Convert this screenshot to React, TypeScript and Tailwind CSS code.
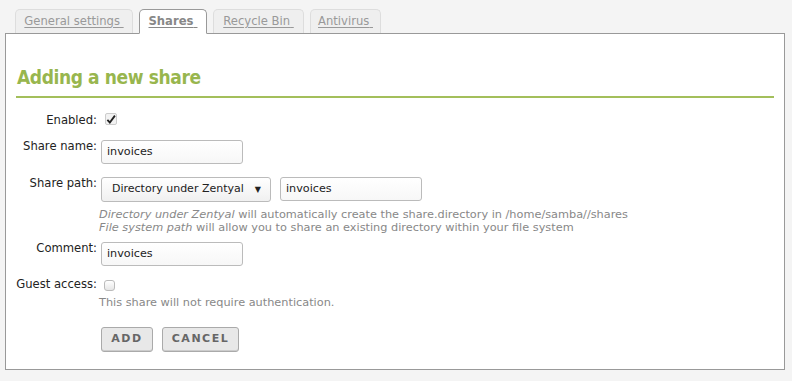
import React from 'react';

const tabs = [
  { label: 'General settings', active: false, w: 'w-[118px]' },
  { label: 'Shares', active: true, w: 'w-[68px]' },
  { label: 'Recycle Bin', active: false, w: 'w-[91px]' },
  { label: 'Antivirus', active: false, w: 'w-[71px]' },
];

const Field: React.FC<{ label: string; children: React.ReactNode }> = ({ label, children }) => (
  <div className="flex items-start">
    <div className="w-[81px] shrink-0 text-right text-[11.6px] leading-[13px] text-[#222] whitespace-nowrap">{label}</div>
    <div className="ml-[4px] flex flex-col">{children}</div>
  </div>
);

const TextInput: React.FC<{ value: string }> = ({ value }) => (
  <div className="w-[142px] h-[24px] rounded-[3px] border border-[#bbb] bg-gradient-to-b from-white to-[#f7f7f7] px-[5px] flex items-center text-[11.2px] text-[#222]">
    {value}
  </div>
);

const App: React.FC = () => {
  return (
    <div className="w-[792px] h-[381px] bg-[#f4f4f4] font-['DejaVu_Sans',sans-serif] overflow-hidden">
      <div className="flex items-end gap-[6px] pl-[15px] pt-[8px] h-[33px] relative z-10">
        {tabs.map(t => (
          <div
            key={t.label}
            className={`${t.w} flex justify-center items-center rounded-t-[5px] border text-[11.6px] ${
              t.active
                ? 'h-[25px] bg-white border-[#999] border-b-white font-bold text-[#888] -mb-px'
                : 'h-[24px] bg-[#efefef] border-[#ddd] border-b-0 text-[#999] mb-0'
            }`}
          >
            <span className="underline underline-offset-2">{t.label}&nbsp;</span>
          </div>
        ))}
      </div>

      <div className="ml-[5px] w-[780px] h-[337px] border border-[#999] bg-white px-[10px]">
        <h2 className="mt-[31px] text-[19px] leading-[24px] tracking-[-0.4px] text-[#98b64e] font-['DejaVu_Sans_Condensed',sans-serif] font-semibold pl-[1px]">
          Adding a new share
        </h2>
        <div className="mt-[7px] h-[2px] bg-[#a3bf5b]" />

        <div className="mt-[16px] flex flex-col">
          <Field label="Enabled:">
            <div className="w-[12px] h-[12px] mt-[-1px] ml-[4px] border border-[#ccc] rounded-[2px] bg-[#f2f2f2] flex items-center justify-center">
              <svg width="11" height="11" viewBox="0 0 11 11">
                <path d="M1.5 6 L4.2 8.8 L9.8 1.2" fill="none" stroke="#222" strokeWidth="2" />
              </svg>
            </div>
          </Field>

          <div className="mt-[13px]">
            <Field label="Share name:">
              <TextInput value="invoices" />
            </Field>
          </div>

          <div className="mt-[13px]">
            <Field label="Share path:">
              <div className="flex gap-[9px]">
                <div className="w-[170px] h-[25px] rounded-[3px] border border-[#bbb] bg-gradient-to-b from-white to-[#f0f0f0] pl-[10px] pr-[9px] flex items-center justify-between text-[11px] text-[#222]">
                  <span>Directory under Zentyal</span>
                  <span className="text-[8px]">▼</span>
                </div>
                <TextInput value="invoices" />
              </div>
              <div className="mt-[6px] text-[11.3px] leading-[13px] text-[#888] -ml-[2px] whitespace-nowrap">
                <div><em>Directory under Zentyal</em> will automatically create the share.directory in /home/samba//shares</div>
                <div><em>File system path</em> will allow you to share an existing directory within your file system</div>
              </div>
            </Field>
          </div>

          <div className="mt-[8px]">
            <Field label="Comment:">
              <TextInput value="invoices" />
            </Field>
          </div>

          <div className="mt-[12px]">
            <Field label="Guest access:">
              <div className="w-[11px] h-[11px] mt-[2px] ml-[3px] border border-[#bbb] rounded-[3px] bg-gradient-to-b from-white to-[#e6e6e6]" />
              <div className="mt-[5px] -ml-[2px] text-[11.3px] leading-[13px] text-[#888] whitespace-nowrap">This share will not require authentication.</div>
            </Field>
          </div>

          <div className="mt-[18px] ml-[85px] flex gap-[9px]">
            <button className="w-[52px] h-[25px] rounded-[3px] border border-[#aaa] bg-[#e8e8e8] text-[11px] font-bold tracking-[1.5px] text-[#666] shadow-[inset_0_-1px_0_#ccc]">
              ADD
            </button>
            <button className="w-[77px] h-[25px] rounded-[3px] border border-[#aaa] bg-[#e8e8e8] text-[11px] font-bold tracking-[1.5px] text-[#666] shadow-[inset_0_-1px_0_#ccc]">
              CANCEL
            </button>
          </div>
        </div>
      </div>
    </div>
  );
};

export default App;
